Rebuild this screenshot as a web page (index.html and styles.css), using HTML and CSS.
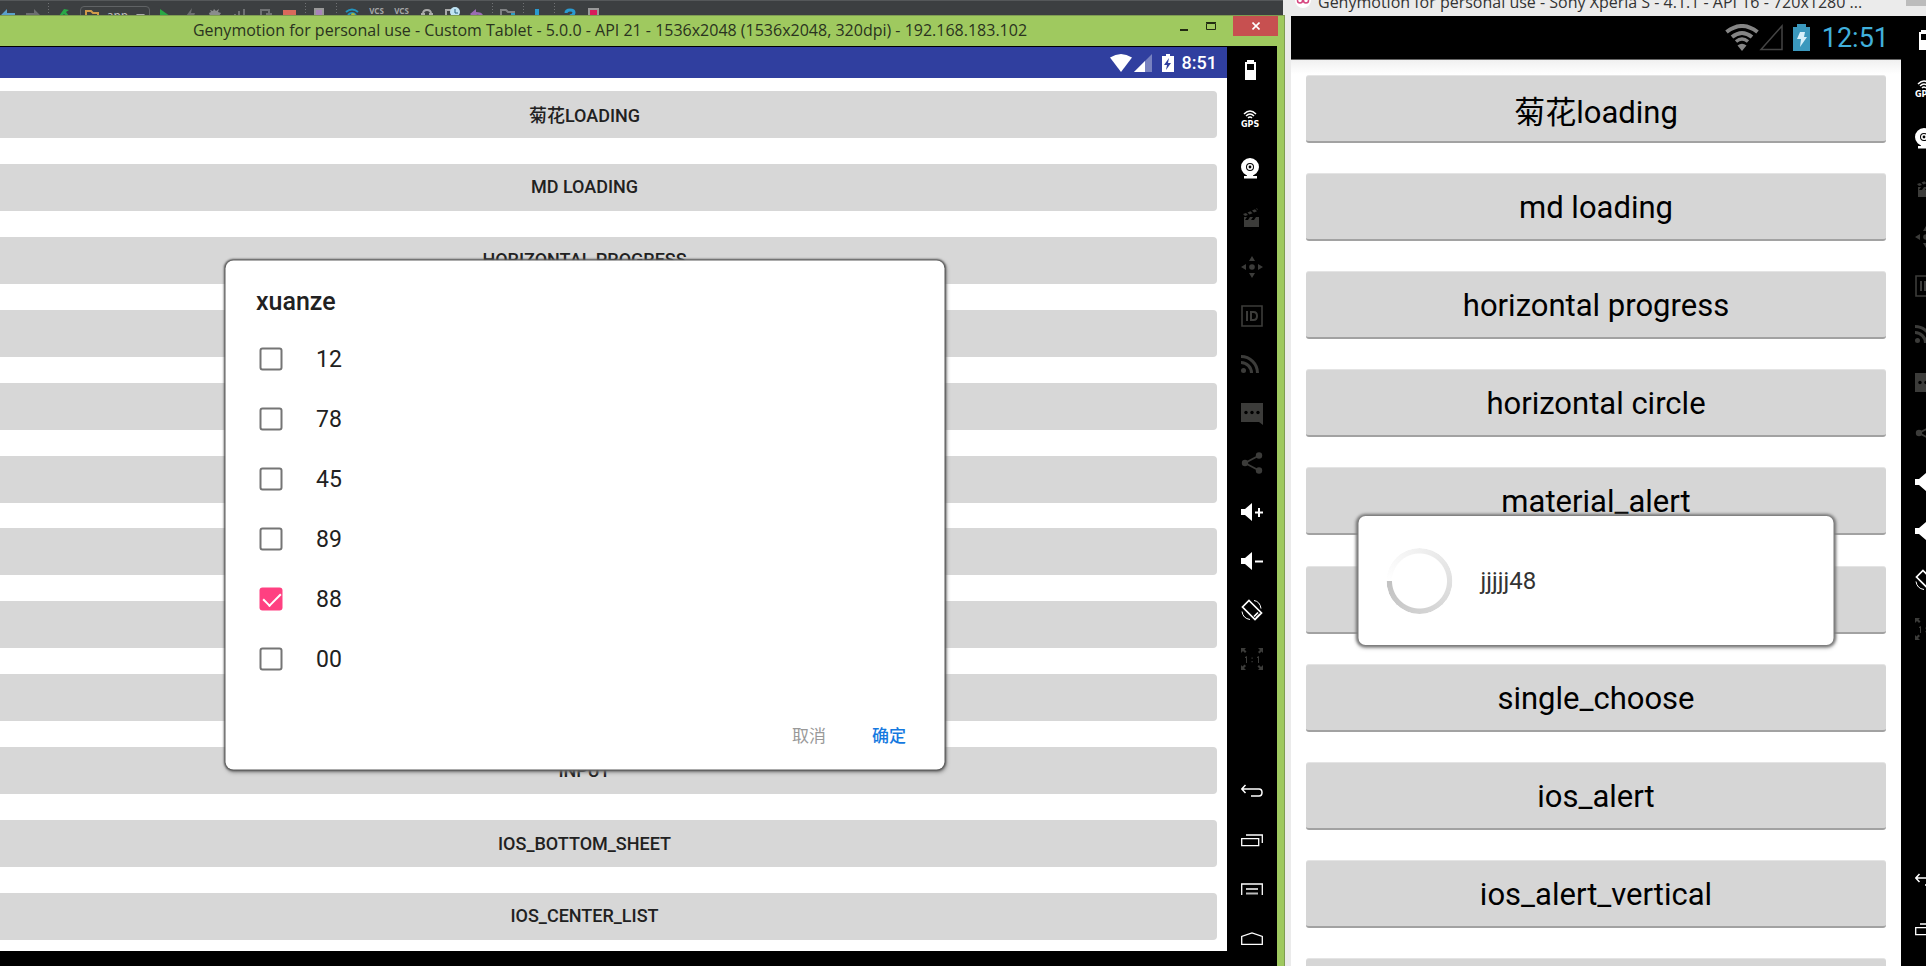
FILE: index.html
```html
<!DOCTYPE html>
<html lang="zh">
<head>
<meta charset="utf-8">
<title>Genymotion</title>
<link rel="stylesheet" href="styles.css">
</head>
<body>
<svg class="defs" width="0" height="0" aria-hidden="true">
  <symbol id="battery" viewBox="0 0 22 22"><path fill="#fff" fill-rule="evenodd" d="M6 0h7v2h2v18H4V2h2zM6 4v6h7V4z"/></symbol>
  <symbol id="gps" viewBox="0 0 22 22"><g fill="none" stroke="#fff" stroke-width="1.5"><path d="M3 5q6-6 12 0M5 7q4-4 8 0M7 9q2-2 4 0"/></g><text x="0" y="18" class="gps-text">GPS</text></symbol>
  <symbol id="webcam" viewBox="0 0 22 22"><circle cx="9" cy="9" r="6.5" fill="none" stroke="#fff" stroke-width="5"/><circle cx="9" cy="9" r="2.2" fill="none" stroke="#fff" stroke-width="1.6"/><path fill="#fff" d="M6 16h6v2h4v2.500H3V18h3z"/></symbol>
  <symbol id="clapper" viewBox="0 0 22 22"><path fill="#3c3c3a" d="M3 20V10h3l-2 3h3l2-3h3l-2 3h3l2-3h3v10zM2 7l3-1 2 2-3 1zM6.500 5.500l3-1.200 2 2-3 1.200zM11 3.500l3-1.200 2 2-3 1.200zM15 1.800l1-.6 1 2z"/></symbol>
  <symbol id="move" viewBox="0 0 22 22"><g fill="#3c3c3a"><circle cx="11" cy="11" r="2.800"/><path d="M11 0l3 5H8zM11 22l3-5H8zM0 11l5-3v6zM22 11l-5-3v6z"/></g></symbol>
  <symbol id="ident" viewBox="0 0 22 22"><path fill="none" stroke="#3c3c3a" stroke-width="1.600" d="M1 1h20v20H1z"/><path fill="none" stroke="#3c3c3a" stroke-width="2" d="M6 6v10M10 7h2.500q3.500 0 3.500 4t-3.500 4H10z"/></symbol>
  <symbol id="rss" viewBox="0 0 22 22"><g fill="none" stroke="#3c3c3a" stroke-width="3"><path d="M0 8.500a10.500 10.500 0 0 1 10.500 10.500M0 2.500a16.500 16.500 0 0 1 16.500 16.500"/></g><circle cx="2.500" cy="16.500" r="2.500" fill="#3c3c3a"/></symbol>
  <symbol id="message" viewBox="0 0 22 22"><path fill="#3c3c3a" d="M0 0h22v22l-4-3H0z"/><g fill="#000"><circle cx="5" cy="9.500" r="1.700"/><circle cx="11" cy="9.500" r="1.700"/><circle cx="17" cy="9.500" r="1.700"/></g></symbol>
  <symbol id="share" viewBox="0 0 22 22"><path fill="none" stroke="#3c3c3a" stroke-width="1.800" d="M18 3.500L4 11l14 7.500"/><g fill="#3c3c3a"><circle cx="4" cy="11" r="3.200"/><circle cx="18" cy="3.500" r="3.200"/><circle cx="18" cy="18.500" r="3.200"/></g></symbol>
  <symbol id="louder" viewBox="0 0 22 22"><path fill="#fff" d="M0 8h4l7-6v18l-7-6H0zM14 10.500h3V7h2v3.500h3v2h-3V16h-2v-3.500h-3z"/></symbol>
  <symbol id="quieter" viewBox="0 0 22 22"><path fill="#fff" d="M0 8h4l7-6v18l-7-6H0zM14 10.500h8v2h-8z"/></symbol>
  <symbol id="rotate" viewBox="0 0 22 22"><g fill="none" stroke="#fff"><path stroke-width="1.700" d="M8 1.500l12.500 12.500-6.500 6.500L1.500 8zM15 19l4-4M13 17.500l4-4"/><path d="M13 1.500q6 1 7 8M1 12.500q1 7 8 8"/></g></symbol>
  <symbol id="actual" viewBox="0 0 22 22"><g fill="#3c3c3a"><path d="M0 0h5L3.500 1.500l2 2-1.500 1.500-2-2L0 5zM22 0v5l-1.500-1.500-2 2L17 4l2-2-2-2zM0 22v-5l1.500 1.500 2-2L5 18l-2 2 2 2zM22 22h-5l1.500-1.500-2-2L18 17l2 2 2-2z"/><path d="M4 9l2-1v7H5v-5H4zM10.500 9.500h1.200v1.200h-1.200zM10.500 13h1.200v1.200h-1.200zM16 9l2-1v7h-1v-5h-1z"/></g></symbol>
  <symbol id="back" viewBox="0 0 22 22"><path fill="none" stroke="#fff" stroke-width="1.500" d="M4.500 5L.8 9l3.700 4M1 9h17q3 0 3 3.500T18 16h-8"/></symbol>
  <symbol id="recents" viewBox="0 0 22 22"><g fill="none" stroke="#fff" stroke-width="1.300"><path d="M.7 9.700h17v7H.7zM5 6h16.300v8"/></g></symbol>
  <symbol id="menu" viewBox="0 0 22 22"><path fill="none" stroke="#fff" stroke-width="1.300" d="M.7 17V6h20.600v11M5 11h12"/><path stroke="#bbb" stroke-width="2" d="M5 15.500h12"/></symbol>
  <symbol id="home" viewBox="0 0 22 22"><path fill="none" stroke="#fff" stroke-width="1.300" d="M.7 17.300V9.500L11 6l10.300 3.500v7.800z"/></symbol>
</svg>

<div class="desktop">
  <div class="left">
    <div class="ide">
      <button class="tool"><svg viewBox="0 0 16 15"><path fill="#5a9fc9" d="M0 15l7-7v4h8v3z"/></svg></button>
      <button class="tool"><svg viewBox="0 0 16 15"><path fill="#6c6e70" d="M16 15L9 8v4H1v3z"/></svg></button>
      <i class="sep"></i>
      <button class="tool"><svg viewBox="0 0 16 15"><path fill="#29a847" d="M3 15L8 8l5 1-3 2 3 4h-3l-2-2-2 2z"/></svg></button>
      <button class="config"><svg width="14" height="9" viewBox="0 0 14 9"><path fill="none" stroke="#d09a4a" stroke-width="2" d="M1 9V1h5l2 2h5v6"/></svg><span>app</span><svg width="9" height="5" viewBox="0 0 9 5"><path fill="#aaa" d="M0 0h9L4.500 5z"/></svg></button>
      <button class="tool"><svg viewBox="0 0 16 15"><path fill="#28a745" d="M3 8l10 7H3z"/></svg></button>
      <button class="tool"><svg viewBox="0 0 16 15"><path fill="#6c6e70" d="M10 7l-6 8h8l1-3H9z"/></svg></button>
      <button class="tool"><svg viewBox="0 0 16 15"><path fill="#8a8c8d" d="M3 15l-1-3 2-1-1-2 3 1 1-2 2 2 3-2-1 3 3 1-2 3z"/></svg></button>
      <button class="tool"><svg viewBox="0 0 16 15"><path fill="none" stroke="#707274" stroke-width="2" d="M3 15v-2M7 15v-5M12 8v7"/></svg></button>
      <button class="tool"><svg viewBox="0 0 16 15"><path fill="none" stroke="#707274" stroke-width="2" d="M4 15V9h8v6M9 13h6"/></svg></button>
      <button class="tool"><svg viewBox="0 0 16 15"><path fill="#d9695b" d="M1 9h13v6H1z"/></svg></button>
      <i class="sep"></i>
      <button class="tool"><svg viewBox="0 0 16 15"><path fill="#a884b8" stroke="#999" stroke-width="2" d="M2 16V8h8v8z"/></svg></button>
      <i class="sep"></i>
      <button class="tool"><svg viewBox="0 0 16 15"><path fill="none" stroke="#2493bd" stroke-width="2" d="M2 11q6-5 12 0M4 14q4-4 8 0"/><circle cx="9" cy="14" r="2" fill="#a9b83b"/></svg></button>
      <button class="tool vcs">VCS</button>
      <button class="tool vcs">VCS</button>
      <button class="tool"><svg viewBox="0 0 16 15"><path fill="none" stroke="#aaa" stroke-width="2" d="M4 13q0-4 4-4t4 4M2 13h4M10 13h4"/></svg></button>
      <button class="tool"><svg viewBox="0 0 16 15"><path fill="none" stroke="#aaa" stroke-width="2" d="M2 15V9h6"/><circle cx="11" cy="11" r="5" fill="#bfe3f3"/><path fill="none" stroke="#29637c" d="M11 8v4h3"/></svg></button>
      <button class="tool"><svg viewBox="0 0 16 15"><path fill="#9a6cb3" d="M1 13l6-5v3q7 0 7 4h-3q-1-2-4-1v1H3z"/></svg></button>
      <i class="sep"></i>
      <button class="tool"><svg viewBox="0 0 16 15"><path fill="none" stroke="#808284" stroke-width="2" d="M1 15V9h5l2 2h7"/><path fill="#2d9ac2" d="M11 12h4v3h-4z"/></svg></button>
      <i class="sep"></i>
      <button class="tool"><svg viewBox="0 0 16 15"><path fill="#2a9ad0" d="M4 8h4v7H4z"/></svg></button>
      <i class="sep"></i>
      <button class="tool"><svg viewBox="0 0 16 15"><path fill="none" stroke="#2a9ad0" stroke-width="3" d="M4 12q0-3 4-3t4 2.500T8 15"/></svg></button>
      <button class="tool"><svg viewBox="0 0 16 15"><path fill="#d81b5b" stroke="#999" stroke-width="2" d="M2 16V8h9v8z"/></svg></button>
    </div>

    <section class="tablet">
      <header class="titlebar">
        <h1 class="wintitle">Genymotion for personal use - Custom Tablet - 5.0.0 - API 21 - 1536x2048 (1536x2048, 320dpi) - 192.168.183.102</h1>
        <div class="winbuttons">
          <button class="winbtn"><svg width="10" height="12"><path fill="#222b12" d="M1 9h8v2H1z"/></svg></button>
          <button class="winbtn"><svg width="10" height="12"><path fill="none" stroke="#222b12" d="M.5 3.500h9v6h-9zM0 2.500h10"/></svg></button>
          <button class="winbtn close"><svg width="8" height="8"><path stroke="#fff" stroke-width="1.600" d="M.5.5l7 7M7.500.5l-7 7"/></svg></button>
        </div>
      </header>
      <div class="tabletbody">
        <div class="device">
          <div class="status">
            <svg width="22" height="18" viewBox="0 0 22 18"><path fill="#fff" d="M0 3.500q11-7 22 0L11 18z"/></svg>
            <svg class="cell" width="18" height="18" viewBox="0 0 18 18"><path fill="#fff" opacity=".35" d="M0 18L18 0v18z"/><path fill="#fff" d="M0 18L11 7v11z"/></svg>
            <svg class="batt" width="12" height="18" viewBox="0 0 12 18"><path fill="#fff" d="M4 0h4v2h4v16H0V2h4z"/><path fill="#303f9f" d="M7 4l-5 7h3l-1 5 5-7H6z"/></svg>
            <span>8:51</span>
          </div>
          <main class="screen">
            <ul class="list">
              <li><button class="item">菊花LOADING</button></li>
              <li><button class="item">MD LOADING</button></li>
              <li><button class="item">HORIZONTAL PROGRESS</button></li>
              <li><button class="item"></button></li>
              <li><button class="item"></button></li>
              <li><button class="item"></button></li>
              <li><button class="item"></button></li>
              <li><button class="item"></button></li>
              <li><button class="item"></button></li>
              <li><button class="item">INPUT</button></li>
              <li><button class="item">IOS_BOTTOM_SHEET</button></li>
              <li><button class="item">IOS_CENTER_LIST</button></li>
            </ul>
            <form class="chooser">
              <h2>xuanze</h2>
              <label><input type="checkbox"><span>12</span></label>
              <label><input type="checkbox"><span>78</span></label>
              <label><input type="checkbox"><span>45</span></label>
              <label><input type="checkbox"><span>89</span></label>
              <label><input type="checkbox" checked><span>88</span></label>
              <label><input type="checkbox"><span>00</span></label>
              <div class="actions">
                <button type="button" class="cancel">取消</button>
                <button type="button" class="ok">确定</button>
              </div>
            </form>
          </main>
        </div>
        <nav class="rail">
          <button><svg><use href="#battery"/></svg></button>
          <button><svg><use href="#gps"/></svg></button>
          <button><svg><use href="#webcam"/></svg></button>
          <button><svg><use href="#clapper"/></svg></button>
          <button><svg><use href="#move"/></svg></button>
          <button><svg><use href="#ident"/></svg></button>
          <button><svg><use href="#rss"/></svg></button>
          <button><svg><use href="#message"/></svg></button>
          <button><svg><use href="#share"/></svg></button>
          <button><svg><use href="#louder"/></svg></button>
          <button><svg><use href="#quieter"/></svg></button>
          <button><svg><use href="#rotate"/></svg></button>
          <button><svg><use href="#actual"/></svg></button>
          <div class="keys">
            <button><svg><use href="#back"/></svg></button>
            <button><svg><use href="#recents"/></svg></button>
            <button><svg><use href="#menu"/></svg></button>
            <button><svg><use href="#home"/></svg></button>
          </div>
        </nav>
      </div>
    </section>
  </div>

  <section class="phone">
    <header class="phonetitle">
      <svg class="logo" width="16" height="16" viewBox="0 0 16 16"><circle cx="8" cy="8" r="8" fill="#fff"/><g fill="none" stroke="#d6457f" stroke-width="1.500"><circle cx="5" cy="8.500" r="2.500"/><circle cx="11" cy="8.500" r="2.500"/></g></svg>
      <h1 class="wintitle">Genymotion for personal use - Sony Xperia S - 4.1.1 - API 16 - 720x1280 ...</h1>
      <button class="phonemin"></button>
    </header>
    <div class="phonebody">
      <div class="phonedevice">
        <div class="phonestatus">
          <svg width="34" height="27" viewBox="0 0 34 27"><g fill="none" stroke="#858585" stroke-width="4"><path d="M1.500 8q15.500-12 31 0" /><path d="M7 13q10-8 20 0"/><path stroke-width="3.500" d="M11 17.500q6-5 12 0"/></g><path fill="#858585" d="M12.500 21.500q4.500-3.500 9 0L17 27z"/></svg>
          <svg width="24" height="27" viewBox="0 0 24 27"><path fill="none" stroke="#444" stroke-width="1.500" d="M2 25.500L23 2v23.500z"/></svg>
          <svg class="phonebatt" width="17" height="27" viewBox="0 0 17 27"><path fill="#3b98bd" d="M4 0h9v3h4v24H0V3h4z"/><path fill="#d8f0fa" d="M7 8h5l-1 5h3l-7 10 1-8H4z"/></svg>
          <span>12:51</span>
        </div>
        <main class="phonescreen">
          <ul class="phonelist">
            <li><button class="holo">菊花loading</button></li>
            <li><button class="holo">md loading</button></li>
            <li><button class="holo">horizontal progress</button></li>
            <li><button class="holo">horizontal circle</button></li>
            <li><button class="holo">material_alert</button></li>
            <li><button class="holo"></button></li>
            <li><button class="holo">single_choose</button></li>
            <li><button class="holo">ios_alert</button></li>
            <li><button class="holo">ios_alert_vertical</button></li>
            <li><button class="holo"></button></li>
          </ul>
          <div class="loading" role="status"><i class="spinner"></i><span>jjjjj48</span></div>
        </main>
      </div>
      <nav class="rail clipped">
        <button><svg><use href="#battery"/></svg></button>
        <button><svg><use href="#gps"/></svg></button>
        <button><svg><use href="#webcam"/></svg></button>
        <button><svg><use href="#clapper"/></svg></button>
        <button><svg><use href="#move"/></svg></button>
        <button><svg><use href="#ident"/></svg></button>
        <button><svg><use href="#rss"/></svg></button>
        <button><svg><use href="#message"/></svg></button>
        <button><svg><use href="#share"/></svg></button>
        <button><svg><use href="#louder"/></svg></button>
        <button><svg><use href="#quieter"/></svg></button>
        <button><svg><use href="#rotate"/></svg></button>
        <button><svg><use href="#actual"/></svg></button>
        <div class="keys">
          <button><svg><use href="#back"/></svg></button>
          <button><svg><use href="#recents"/></svg></button>
        </div>
      </nav>
    </div>
  </section>
</div>
</body>
</html>
```
FILE: styles.css
```css
* { box-sizing: border-box; }
html, body { height: 100%; margin: 0; overflow: hidden; }
body { font-family: Roboto, "Noto Sans CJK SC", sans-serif; background: #ebebeb; }
button { border: 0; padding: 0; margin: 0; background: none; font: inherit; color: inherit; }
ul { list-style: none; margin: 0; padding: 0; }
h1, h2 { margin: 0; }
.defs { position: absolute; }

.desktop { display: grid; grid-template-columns: minmax(0, 2fr) minmax(0, 1fr); column-gap: 0; height: 100vh; }
.left { min-width: 0; min-height: 0; display: flex; flex-direction: column; margin-right: -1px; }
.wintitle { font: 400 16px/24px "Open Sans", sans-serif; white-space: nowrap; }

/* toolbar of the window behind */
.ide { height: 15px; margin-right: 2px; display: flex; overflow: hidden; background: #3c3f41; border-top: 1px solid #55585a; }
.tool { flex: none; width: 25px; height: 14px; display: flex; justify-content: center; }
.tool:first-child { margin-left: -5px; }
.tool svg { width: 16px; height: 15px; flex: none; }
.vcs { font: 700 8px/20px "Noto Sans", sans-serif; color: #a4a6a7; }
.sep { flex: none; width: 6px; background: repeating-linear-gradient(#3c3f41 0 2px, #707274 2px 3px) center / 1px 100% no-repeat; }
.config { flex: none; width: 70px; height: 20px; margin: 5px 2px 0 4px; padding: 3px 4px; display: flex; justify-content: space-between; border: 1px solid #606365; border-radius: 4px; font: 12px/12px "Noto Sans", sans-serif; color: #bbb; }
.config svg:last-child { margin-top: 4px; }

/* tablet window */
.tablet { flex: 1; min-height: 0; display: flex; flex-direction: column; background: #9fc95f; border: 1px solid #7f9c52; border-width: 1px 1px 0 0; }
.titlebar { height: 30px; display: flex; color: #2a3320; }
.titlebar .wintitle { flex: 1; margin-left: 50px; text-align: center; line-height: 28px; }
.winbuttons { display: flex; margin-right: 6px; height: 20px; }
.winbtn { width: 27px; display: flex; align-items: center; justify-content: center; }
.close { width: 45px; margin-left: 9px; background: #c75050; }
.tabletbody { flex: 1; min-height: 0; display: flex; margin-right: 7px; background: #000; }
.device { flex: 1; min-width: 0; display: flex; flex-direction: column; overflow: hidden; padding: 1px 0 15px; }
.status { flex: none; height: 31px; display: flex; align-items: center; justify-content: flex-end; padding-right: 10px; background: #303f9f; color: #fff; font-weight: 500; font-size: 18px; }
.cell { margin-left: 2px; }
.batt { margin: 0 8px 0 10px; }
.screen { flex: 1; min-height: 0; position: relative; margin-left: -58px; padding: 13px 10px 11px; background: #fff; }
.list { height: 100%; display: flex; flex-direction: column; justify-content: space-between; }
.item { display: block; width: 100%; height: 47px; padding-bottom: 1px; border-radius: 4px; background: #d7d7d7; color: #212121; font-weight: 500; font-size: 18px; }

.chooser { position: absolute; top: 50%; left: 50%; translate: -50% -50%; width: 719px; padding: 24px 31px 17px; background: #fff; border-radius: 8px; box-shadow: 0 0 2px 1px #555, 1px 2px 4px #777; color: #212121; }
.chooser h2 { font-size: 25px; line-height: 34px; font-weight: 500; margin-bottom: 11px; }
.chooser label { display: flex; align-items: center; gap: 34px; height: 60px; padding-left: 3px; font-size: 23px; }
.chooser input { appearance: none; width: 23px; height: 23px; margin: 0; border: 2px solid #757575; border-radius: 3px; }
.chooser input:checked { border: 0; background: #ff4081; }
.chooser input:checked::before { content: ""; display: block; width: 15px; height: 8px; margin: 5px 0 0 4px; border: solid #fff; border-width: 0 0 2px 2px; rotate: -45deg; }
.actions { display: flex; justify-content: flex-end; gap: 46px; margin-top: 27px; padding-right: 7px; font: 17px/36px "Noto Sans CJK SC", sans-serif; }
.cancel { color: #999; }
.ok { color: #1479e0; font-weight: 500; }

/* icon rail */
.rail { flex: none; width: 50px; display: flex; flex-direction: column; background: #000; overflow: hidden; }
.rail button { flex: none; width: 50px; height: 49px; display: flex; align-items: center; justify-content: center; }
.rail svg { width: 22px; height: 22px; }
.gps-text { font: 700 8px "DejaVu Sans", sans-serif; fill: #fff; }
.keys { margin-top: auto; padding-bottom: 4px; }
.clipped { width: 25px; }
.clipped .keys { margin-top: 202px; }

/* phone window */
.phone { min-width: 0; min-height: 0; padding-left: 7px; display: flex; flex-direction: column; }
.phonetitle { height: 16px; flex: none; display: flex; align-items: flex-end; overflow: hidden; color: #333; }
.phonetitle .wintitle { margin: 0 auto 0 7px; line-height: 28px; }
.logo { margin: 0 0 8px 4px; }
.phonemin { width: 20px; height: 6px; align-self: flex-start; background: #bcbcbc; }
.phonebody { flex: 1; min-height: 0; display: flex; }
.phonedevice { flex: 1; min-width: 0; display: flex; flex-direction: column; }
.phonestatus { flex: none; height: 44px; display: flex; align-items: center; justify-content: flex-end; padding-right: 12px; background: #000; color: #41b0dc; font-size: 27px; border-bottom: 1px solid #666; }
.phonebatt { margin: 0 12px 0 10px; }
.phonescreen { flex: 1; min-height: 0; position: relative; padding: 15px 15px 0; background: linear-gradient(#f0f0f0, #fff 14px); }
.phonelist { height: 100%; overflow: hidden; display: grid; grid-template-rows: repeat(9, minmax(0, 1fr)) 8px; }
.holo { display: block; width: 100%; height: 68px; padding-top: 2px; border-radius: 3px; background: #d6d6d6; border-top: 1px solid #e4e4e4; border-bottom: 2px solid #a2a2a2; color: #000; font-size: 31px; }
.loading { position: absolute; top: 456px; left: 50%; translate: -50% 0; width: 475px; height: 129px; padding: 0 28px; display: flex; align-items: center; gap: 28px; background: #fff; border-radius: 7px; box-shadow: 0 0 3px 2px #777, 0 2px 5px #999; color: #333; font-size: 24px; }
.spinner { width: 66px; height: 66px; border-radius: 50%; background: conic-gradient(from 270deg, #fff, #c2c2c2); mask: radial-gradient(circle, transparent 27px, #000 28px); }
```
